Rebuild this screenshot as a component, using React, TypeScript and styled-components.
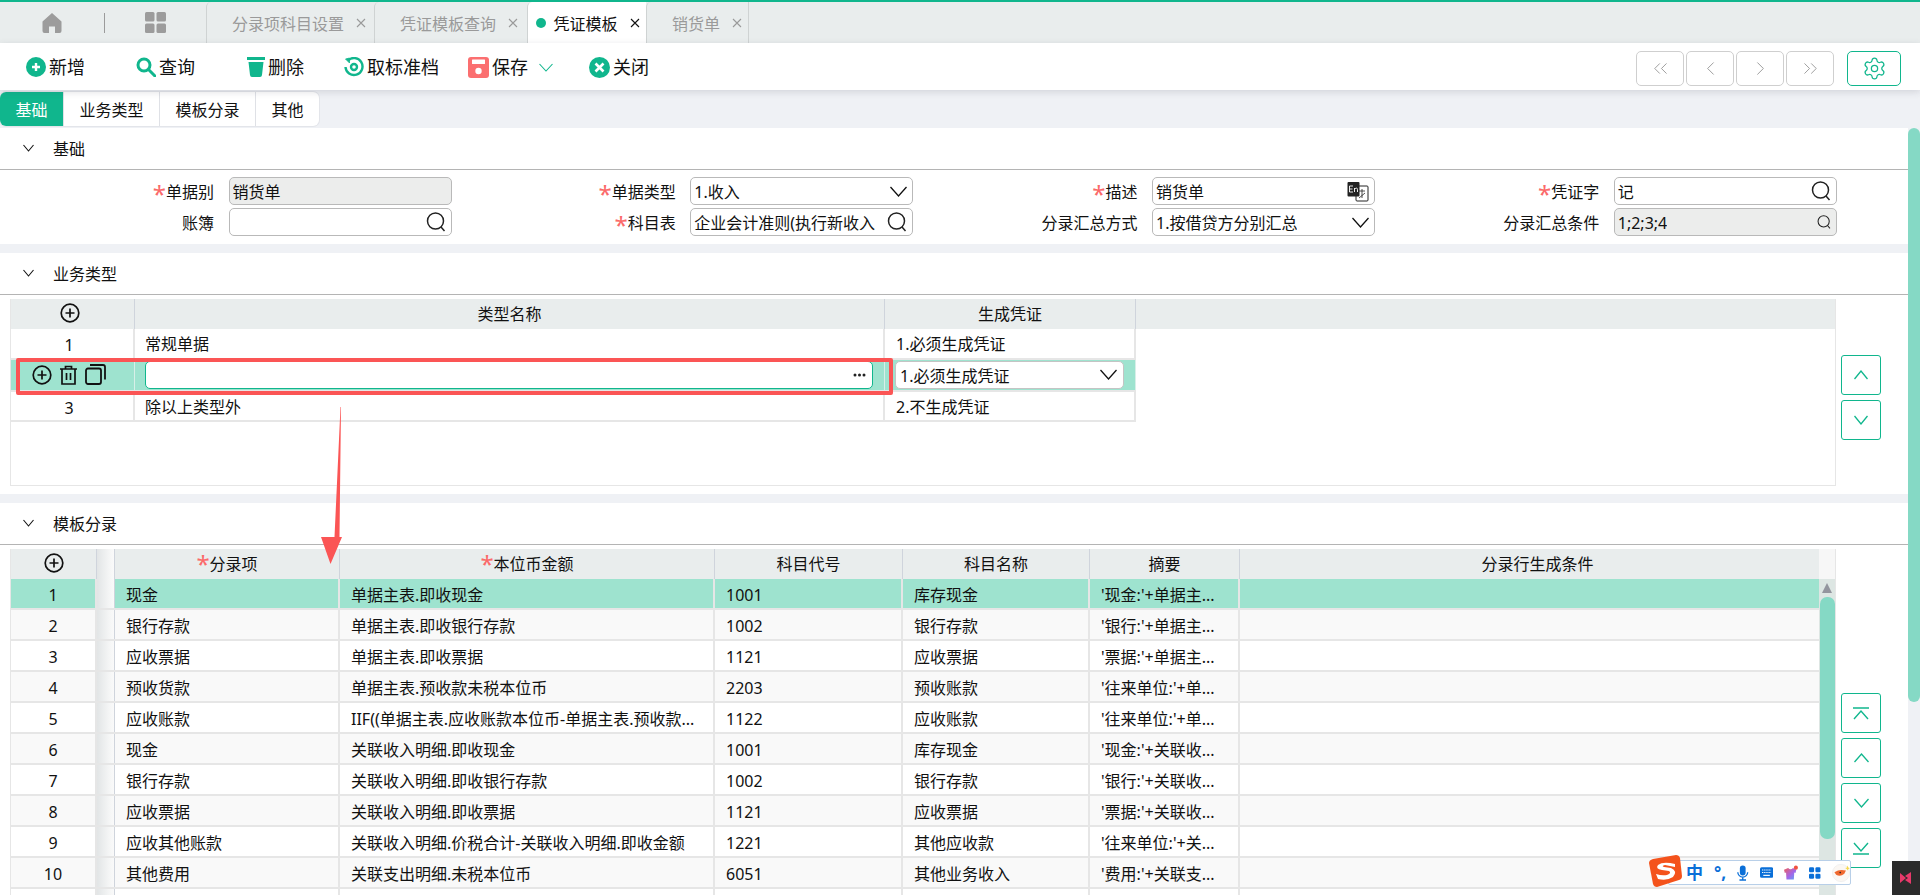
import React from "react";
import styled, { createGlobalStyle } from "styled-components";
import { ChevronLeft, ChevronRight, ChevronsLeft, ChevronsRight, Settings } from "lucide-react";

const GREEN = "#10b68d";
const SELECTED = "#9ee3cf";
const HEAD = "#e9eded";
const LINE = "#e6e6e6";

const GlobalStyle = createGlobalStyle`
  html, body {
    margin: 0;
    padding: 0;
    overflow: hidden;
    background: #eff1f5;
    font-family: "Noto Sans", "Noto Sans CJK SC", "Liberation Sans", sans-serif;
    font-size: 16px;
    color: #111;
  }
  * {
    box-sizing: border-box;
  }
`;

const Page = styled.div`
  position: relative;
  display: flex;
  flex-direction: column;
  width: 1920px;
  height: 895px;
  overflow: hidden;
  background: #eff1f5;
`;

/* top tabs */
const TopBar = styled.div`
  display: flex;
  height: 43px;
  flex: none;
  background: ${HEAD};
  border-top: 2px solid ${GREEN};
`;

const HomeArea = styled.div`
  display: flex;
  align-items: center;
  width: 206px;
  padding: 0 0 0 42px;
`;

const Separator = styled.span`
  width: 1px;
  height: 20px;
  margin: 0 40px 0 42px;
  background: #9b9b9b;
`;

const PageTab = styled.div<{ $width: number; $active?: boolean }>`
  display: flex;
  align-items: center;
  width: ${(p) => p.$width}px;
  padding-left: ${(p) => (p.$active ? 8 : 25)}px;
  background: ${(p) => (p.$active ? "#fff" : "transparent")};
  border-left: 1px solid #cfd3d3;
  border-radius: 5px 0 0 0;
  color: ${(p) => (p.$active ? "#111" : "#9a9a9a")};
  white-space: nowrap;

  &:last-child {
    border-right: 1px solid #cfd3d3;
  }
`;

const Dot = styled.span`
  width: 10px;
  height: 10px;
  margin-right: 8px;
  border-radius: 50%;
  background: ${GREEN};
`;

const TabClose = styled.svg`
  width: 10px;
  height: 10px;
  margin-left: 12px;
  stroke: currentColor;
  stroke-width: 1.1;
  fill: none;
`;

/* toolbar */
const Toolbar = styled.div`
  position: relative;
  z-index: 2;
  display: flex;
  align-items: center;
  flex: none;
  height: 47px;
  padding: 4px 19px 0 26px;
  background: #fff;
  box-shadow: 0 2px 7px rgba(60, 65, 80, 0.16);
`;

const ToolButton = styled.div<{ $after: number }>`
  display: flex;
  align-items: center;
  gap: 3px;
  margin-top: -3px;
  margin-right: ${(p) => p.$after}px;
  font-size: 18px;
  line-height: 24px;
  white-space: nowrap;
`;

const NavGroup = styled.div`
  display: flex;
  gap: 2px;
  margin-left: auto;
`;

const NavButton = styled.div`
  display: flex;
  align-items: center;
  justify-content: center;
  width: 48px;
  height: 35px;
  border: 1px solid #cfcfcf;
  border-radius: 5px;
  color: #8f8f8f;
`;

const SettingButton = styled.div`
  display: flex;
  align-items: center;
  justify-content: center;
  width: 54px;
  height: 35px;
  margin-left: 13px;
  border: 1px solid ${GREEN};
  border-radius: 5px;
  color: ${GREEN};
`;

/* form tabs */
const FormTabs = styled.div`
  display: flex;
  flex: none;
  align-self: flex-start;
  height: 34px;
  margin: 2px 0 2px;
  background: #fff;
  border-radius: 6px;
  box-shadow: 0 0 0 1px #e3e5ea;
`;

const FormTab = styled.div<{ $active?: boolean }>`
  display: flex;
  align-items: center;
  padding: 0 15.5px;
  background: ${(p) => (p.$active ? GREEN : "transparent")};
  border-radius: ${(p) => (p.$active ? "6px 0 0 6px" : "0")};
  border-right: 1px solid #dfe1e6;
  color: ${(p) => (p.$active ? "#fff" : "#111")};

  &:last-child {
    border-right: 0;
  }
`;

/* scrolling body */
const Body = styled.div`
  display: flex;
  flex: 1;
  min-height: 0;
`;

const Content = styled.div`
  display: flex;
  flex-direction: column;
  gap: 9px;
  width: 1908px;
  flex: none;
`;

const PageScroll = styled.div`
  width: 12px;
  flex: none;
`;

const PageThumb = styled.div`
  height: 574px;
  background: #85d9c5;
  border-radius: 6px;
`;

const Section = styled.section`
  background: #fff;
`;

const SectionHead = styled.div`
  display: flex;
  align-items: center;
  gap: 19px;
  height: 42px;
  padding: 0 0 2px 23px;
  border-bottom: 1px solid #b4b4b4;
`;

/* base form */
const FormGrid = styled.div`
  display: grid;
  grid-template-columns: repeat(4, 461.75px);
  row-gap: 3px;
  padding: 7px 0 8px;
`;

const Field = styled.div`
  display: grid;
  grid-template-columns: 214px 223px;
  column-gap: 14.5px;
  align-items: center;
`;

const Label = styled.div`
  text-align: right;
  white-space: nowrap;
`;

const Star = styled.span`
  color: #fb6a6a;
  font-size: 24px;
  line-height: 0;
  vertical-align: -5px;
`;

const InputBox = styled.div<{ $disabled?: boolean }>`
  display: flex;
  align-items: center;
  justify-content: space-between;
  height: 28px;
  padding: 0 5px 0 3px;
  background: ${(p) => (p.$disabled ? "#ecedec" : "#fff")};
  border: 1px solid #b9b9b9;
  border-radius: 5px;
  white-space: nowrap;
  overflow: hidden;
  line-height: 26px;
`;

const InputText = styled.span`
  overflow: hidden;
  min-width: 0;
  padding-top: 1px;
`;

/* tables */
const TableRow = styled.div`
  display: flex;
  gap: 5px;
  padding: 4px 0 8px 10px;
`;

const GridTable = styled.div<{ $height?: number }>`
  position: relative;
  width: 1826px;
  flex: none;
  height: ${(p) => (p.$height ? `${p.$height}px` : "auto")};
  border-bottom: 1px solid ${LINE};
  border-left: 1px solid ${LINE};
  border-right: 1px solid ${LINE};
`;

const Row = styled.div<{ $cols: string; $bg?: string; $height?: number; $line?: boolean; $fit?: boolean }>`
  display: grid;
  grid-template-columns: ${(p) => p.$cols};
  width: ${(p) => (p.$fit ? "1125px" : "auto")};
  height: ${(p) => p.$height ?? 31}px;
  background: ${(p) => p.$bg ?? "#fff"};
  border-bottom: ${(p) => (p.$line === false ? "0" : `2px solid ${LINE}`)};
`;

const HeadCell = styled.div<{ $shift?: number }>`
  display: flex;
  align-items: center;
  justify-content: center;
  padding-right: ${(p) => p.$shift ?? 0}px;
  border-right: 1px solid #cfd4dc;
  line-height: 20px;

  &:last-child {
    border-right: 0;
  }

  svg {
    margin-bottom: 2px;
  }
`;

const Cell = styled.div`
  padding: 2px 11px 0;
  border-right: 2px solid ${LINE};
  line-height: 29px;
  white-space: nowrap;
  overflow: hidden;
`;

const NumberCell = styled(Cell)<{ $shift?: number }>`
  padding: 2px ${(p) => p.$shift ?? 0}px 0 0;
  text-align: center;
`;

const NameCell = styled(Cell)`
  padding: 1px 10px 0;
`;

const BizCell = styled(Cell)`
  padding-top: 1px;
`;

const PlainCell = styled.div`
  display: flex;
  align-items: center;
  justify-content: center;
  gap: 7px;
  padding: 0 7px 1px 0;
  border-right: 1px solid #d8efe8;
`;

const EditCell = styled.div`
  display: flex;
  align-items: center;
  padding: 0 11px 1px 10px;
  border-right: 1px solid #d8efe8;
`;

const EditInput = styled.div<{ $focus?: boolean }>`
  display: flex;
  align-items: center;
  justify-content: space-between;
  flex: 1;
  height: 28px;
  padding: 0 6px 0 4px;
  background: #fff;
  border: 1.5px solid ${(p) => (p.$focus ? GREEN : "#c4c4c4")};
  border-radius: 5px;
  white-space: nowrap;
`;

const Blank = styled.div`
  height: 100%;
`;

const FrozenGap = styled.div`
  border-right: 1px solid #cfd4dc;
  background: linear-gradient(90deg, #e2e5e6, #f4f5f5 70%, #fafafa);
`;

const SideButtons = styled.div<{ $top: number }>`
  display: flex;
  flex-direction: column;
  gap: 5px;
  padding-top: ${(p) => p.$top}px;
`;

const SideButton = styled.div`
  display: flex;
  align-items: center;
  justify-content: center;
  width: 40px;
  height: 40px;
  background: #fff;
  border: 1px solid ${GREEN};
  border-radius: 3px;
  color: ${GREEN};
`;

const ScrollCol = styled.div`
  position: absolute;
  top: 0;
  right: 0;
  bottom: 0;
  width: 16px;
  background: #dde6e3;
`;

const ScrollCorner = styled.div`
  height: 30px;
  background: #f7f7f7;
`;

const ScrollArrow = styled.div`
  width: 0;
  height: 0;
  margin: 4px auto 4px;
  border-left: 5.5px solid transparent;
  border-right: 5.5px solid transparent;
  border-bottom: 10px solid #93959e;
`;

const ScrollThumb = styled.div`
  width: 15px;
  height: 242px;
  margin: 0 auto;
  background: #85d9c5;
  border-radius: 7px;
`;

/* annotations on the screenshot */
const RedBox = styled.div`
  position: absolute;
  left: 16px;
  top: 358px;
  width: 877px;
  height: 37px;
  border: 4px solid #fb5555;
  border-radius: 2px;
  pointer-events: none;
`;

const Arrow = styled.svg`
  position: absolute;
  left: 315px;
  top: 400px;
  width: 35px;
  height: 170px;
  pointer-events: none;
`;

/* input method bar */
const ImeBar = styled.div`
  position: absolute;
  left: 1668px;
  top: 860px;
  display: flex;
  align-items: center;
  gap: 11px;
  width: 183px;
  height: 25px;
  padding-left: 17px;
  background: #fff;
  border: 1px solid #b8cfe8;
  border-radius: 2px;
  color: #0a6fd8;
`;

const ImeLogo = styled.svg`
  position: absolute;
  left: 1649px;
  top: 855px;
  width: 33px;
  height: 32px;
`;

const ImeChar = styled.span`
  font-size: 17px;
  font-weight: 700;
  line-height: 20px;
`;

const CornerBadge = styled.div`
  position: absolute;
  right: 0;
  bottom: 0;
  display: flex;
  align-items: center;
  justify-content: center;
  width: 28px;
  height: 34px;
  background: #2b2b2b;
`;

/* icons */
const HomeIcon = () => (
  <svg width="20" height="20" viewBox="0 0 20 20" fill="#9c9c9c">
    <path d="M10 0 L19.5 8.5 V18 Q19.5 20 17.5 20 H13 V13.5 H7 V20 H2.5 Q0.5 20 0.5 18 V8.5 Z" />
  </svg>
);

const GridIcon = () => (
  <svg width="21" height="21" viewBox="0 0 21 21" fill="#9c9c9c">
    <rect x="0" y="0" width="9.5" height="9.5" rx="1.5" />
    <rect x="11.5" y="0" width="9.5" height="9.5" rx="1.5" />
    <rect x="0" y="11.5" width="9.5" height="9.5" rx="1.5" />
    <rect x="11.5" y="11.5" width="9.5" height="9.5" rx="1.5" />
  </svg>
);

const CloseGlyph = () => (
  <TabClose viewBox="0 0 10 10">
    <path d="M1 1 L9 9 M9 1 L1 9" />
  </TabClose>
);

const AddIcon = () => (
  <svg width="20" height="20" viewBox="0 0 20 20">
    <circle cx="10" cy="10" r="10" fill={GREEN} />
    <path d="M10 6 V14 M6 10 H14" stroke="#fff" strokeWidth="2.4" />
  </svg>
);

const QueryIcon = () => (
  <svg width="20" height="20" viewBox="0 0 20 20" fill="none" stroke={GREEN}>
    <circle cx="8" cy="8" r="6" strokeWidth="3" />
    <path d="M12.5 12.5 L19 19" strokeWidth="3" strokeLinecap="round" />
  </svg>
);

const DeleteIcon = () => (
  <svg width="18" height="20" viewBox="0 0 18 20" fill={GREEN}>
    <rect x="0" y="0" width="18" height="3" />
    <path d="M1.5 5 H16.5 L15 18 Q14.8 20 13 20 H5 Q3.2 20 3 18 Z" />
  </svg>
);

const UnfileIcon = () => (
  <svg width="20" height="20" viewBox="0 0 20 20" fill="none" stroke={GREEN}>
    <path d="M4 3.5 A8.5 8.5 0 1 1 1.5 10" strokeWidth="2.4" />
    <path d="M1.5 2 L5.5 1 L5.5 6 Z" fill={GREEN} strokeWidth="0.8" />
    <circle cx="10" cy="10" r="3" strokeWidth="2.4" />
  </svg>
);

const SaveIcon = () => (
  <svg width="21" height="21" viewBox="0 0 21 21">
    <rect x="0" y="0" width="21" height="21" rx="3" fill="#fb6f70" />
    <rect x="4" y="2.5" width="13" height="4.5" rx="0.5" fill="#fff" />
    <circle cx="10.5" cy="14" r="3.2" fill="#fff" />
  </svg>
);

const CloseIcon = () => (
  <svg width="21" height="21" viewBox="0 0 21 21">
    <circle cx="10.5" cy="10.5" r="10.5" fill={GREEN} />
    <path d="M6.5 6.5 L14.5 14.5 M14.5 6.5 L6.5 14.5" stroke="#fff" strokeWidth="2.6" />
  </svg>
);

const LensIcon = ({ size = 20 }: { size?: number }) => (
  <svg width={size} height={size} viewBox="0 0 20 20" fill="none" stroke="#222" strokeWidth="1.5">
    <circle cx="9.5" cy="9" r="8" />
    <path d="M15 15 L18.5 19" />
  </svg>
);

const EnZhIcon = () => (
  <svg width="22" height="22" viewBox="0 0 22 22">
    <rect x="9" y="6" width="12" height="15" rx="1" fill="#fff" stroke="#222" strokeWidth="1" />
    <path d="M12 11 H18 M15 9 V18 M12 18 L18 13" stroke="#222" strokeWidth="0.8" fill="none" />
    <rect x="0.5" y="2" width="12" height="14.5" rx="1" fill="#222" />
    <path d="M2.5 6 H6 M2.5 6 V12 H6 M2.5 9 H5.5 M7.5 12 V8 M7.5 9 Q10.5 7 10.5 9.5 V12" stroke="#fff" strokeWidth="0.9" fill="none" />
  </svg>
);

const PlusCircle = () => (
  <svg width="20" height="20" viewBox="0 0 20 20" fill="none" stroke="#111" strokeWidth="1.7">
    <circle cx="10" cy="10" r="8.8" />
    <path d="M10 5.5 V14.5 M5.5 10 H14.5" />
  </svg>
);

const TrashIcon = () => (
  <svg width="19" height="20" viewBox="0 0 19 20" fill="none" stroke="#111" strokeWidth="1.7">
    <path d="M1 4 H18 M6.5 4 V1.5 H12.5 V4 M3 4 V19 H16 V4 M7.5 8 V15 M11.5 8 V15" />
  </svg>
);

const CopyIcon = () => (
  <svg width="21" height="21" viewBox="0 0 21 21" fill="none" stroke="#111" strokeWidth="1.8">
    <rect x="1" y="4.5" width="15" height="15.5" rx="2" />
    <path d="M5 1 H18 Q20 1 20 3 V15.5" />
  </svg>
);

const DotsIcon = () => (
  <svg width="13" height="4" viewBox="0 0 13 4" fill="#222">
    <circle cx="2" cy="2" r="1.5" />
    <circle cx="6.5" cy="2" r="1.5" />
    <circle cx="11" cy="2" r="1.5" />
  </svg>
);

const Chevron = ({ w, h, up, color = "currentColor", weight = 1.3 }: { w: number; h: number; up?: boolean; color?: string; weight?: number }) => (
  <svg width={w} height={h + 2} viewBox={`0 0 ${w} ${h + 2}`} fill="none" stroke={color} strokeWidth={weight}>
    <path d={up ? `M0.5 ${h + 1} L${w / 2} 1 L${w - 0.5} ${h + 1}` : `M0.5 1 L${w / 2} ${h + 1} L${w - 0.5} 1`} />
  </svg>
);

const BarUp = () => (
  <svg width="16" height="13" viewBox="0 0 16 13" fill="none" stroke={GREEN} strokeWidth="1.4">
    <path d="M0 1 H16 M1 12 L8 4 L15 12" />
  </svg>
);

const BarDown = () => (
  <svg width="16" height="13" viewBox="0 0 16 13" fill="none" stroke={GREEN} strokeWidth="1.4">
    <path d="M0 12 H16 M1 1 L8 9 L15 1" />
  </svg>
);

const BIZ_COLS = "124px 750px 251px 1fr";
const BIZ_BODY_COLS = "124px 750px 251px";
const ENTRY_COLS = "86px 18px 225px 375px 188px 187px 150px 1fr";

const entries = [
  ["现金", "单据主表.即收现金", "1001", "库存现金", "'现金:'+单据主..."],
  ["银行存款", "单据主表.即收银行存款", "1002", "银行存款", "'银行:'+单据主..."],
  ["应收票据", "单据主表.即收票据", "1121", "应收票据", "'票据:'+单据主..."],
  ["预收货款", "单据主表.预收款未税本位币", "2203", "预收账款", "'往来单位:'+单..."],
  ["应收账款", "IIF((单据主表.应收账款本位币-单据主表.预收款...", "1122", "应收账款", "'往来单位:'+单..."],
  ["现金", "关联收入明细.即收现金", "1001", "库存现金", "'现金:'+关联收..."],
  ["银行存款", "关联收入明细.即收银行存款", "1002", "银行存款", "'银行:'+关联收..."],
  ["应收票据", "关联收入明细.即收票据", "1121", "应收票据", "'票据:'+关联收..."],
  ["应收其他账款", "关联收入明细.价税合计-关联收入明细.即收金额", "1221", "其他应收款", "'往来单位:'+关..."],
  ["其他费用", "关联支出明细.未税本位币", "6051", "其他业务收入", "'费用:'+关联支..."],
];

const rowColor = (i: number) => {
  if (i === 0) return SELECTED;
  return i % 2 === 1 ? "#f9f9f9" : "#fff";
};

const SectionTitle = ({ title }: { title: string }) => (
  <SectionHead>
    <Chevron w={11} h={6} weight={1.1} />
    {title}
  </SectionHead>
);

const FormField = ({ label, required, children }: { label: string; required?: boolean; children: React.ReactNode }) => (
  <Field>
    <Label>
      {required && <Star>*</Star>}
      {label}
    </Label>
    {children}
  </Field>
);

const App = () => {
  return (
    <Page>
      <GlobalStyle />
      <TopBar>
        <HomeArea>
          <HomeIcon />
          <Separator />
          <GridIcon />
        </HomeArea>
        <PageTab $width={168}>
          分录项科目设置
          <CloseGlyph />
        </PageTab>
        <PageTab $width={152.5}>
          凭证模板查询
          <CloseGlyph />
        </PageTab>
        <PageTab $width={119.5} $active>
          <Dot />
          凭证模板
          <CloseGlyph />
        </PageTab>
        <PageTab $width={103}>
          销货单
          <CloseGlyph />
        </PageTab>
      </TopBar>

      <Toolbar>
        <ToolButton $after={51}>
          <AddIcon />
          新增
        </ToolButton>
        <ToolButton $after={52}>
          <QueryIcon />
          查询
        </ToolButton>
        <ToolButton $after={40}>
          <DeleteIcon />
          删除
        </ToolButton>
        <ToolButton $after={29}>
          <UnfileIcon />
          取标准档
        </ToolButton>
        <ToolButton $after={11}>
          <SaveIcon />
          保存
        </ToolButton>
        <ToolButton $after={36}>
          <Chevron w={14} h={7} color={GREEN} weight={1.1} />
        </ToolButton>
        <ToolButton $after={0}>
          <CloseIcon />
          关闭
        </ToolButton>
        <NavGroup>
          <NavButton>
            <ChevronsLeft size={23} strokeWidth={0.9} />
          </NavButton>
          <NavButton>
            <ChevronLeft size={23} strokeWidth={0.9} />
          </NavButton>
          <NavButton>
            <ChevronRight size={23} strokeWidth={0.9} />
          </NavButton>
          <NavButton>
            <ChevronsRight size={23} strokeWidth={0.9} />
          </NavButton>
        </NavGroup>
        <SettingButton>
          <Settings size={25} strokeWidth={1.2} />
        </SettingButton>
      </Toolbar>

      <FormTabs>
        <FormTab $active>基础</FormTab>
        <FormTab>业务类型</FormTab>
        <FormTab>模板分录</FormTab>
        <FormTab>其他</FormTab>
      </FormTabs>

      <Body>
        <Content>
          <Section>
            <SectionTitle title="基础" />
            <FormGrid>
              <FormField label="单据别" required>
                <InputBox $disabled>
                  <InputText>销货单</InputText>
                </InputBox>
              </FormField>
              <FormField label="单据类型" required>
                <InputBox>
                  <InputText>1.收入</InputText>
                  <Chevron w={17} h={9} />
                </InputBox>
              </FormField>
              <FormField label="描述" required>
                <InputBox>
                  <InputText>销货单</InputText>
                  <EnZhIcon />
                </InputBox>
              </FormField>
              <FormField label="凭证字" required>
                <InputBox>
                  <InputText>记</InputText>
                  <LensIcon />
                </InputBox>
              </FormField>
              <FormField label="账簿">
                <InputBox>
                  <InputText />
                  <LensIcon />
                </InputBox>
              </FormField>
              <FormField label="科目表" required>
                <InputBox>
                  <InputText>企业会计准则(执行新收入</InputText>
                  <LensIcon />
                </InputBox>
              </FormField>
              <FormField label="分录汇总方式">
                <InputBox>
                  <InputText>1.按借贷方分别汇总</InputText>
                  <Chevron w={17} h={9} />
                </InputBox>
              </FormField>
              <FormField label="分录汇总条件">
                <InputBox $disabled>
                  <InputText>1;2;3;4</InputText>
                  <LensIcon size={14} />
                </InputBox>
              </FormField>
            </FormGrid>
          </Section>

          <Section>
            <SectionTitle title="业务类型" />
            <TableRow>
              <GridTable $height={187}>
                <Row $cols={BIZ_COLS} $bg={HEAD} $height={30} $line={false}>
                  <HeadCell $shift={5}>
                    <PlusCircle />
                  </HeadCell>
                  <HeadCell>类型名称</HeadCell>
                  <HeadCell>生成凭证</HeadCell>
                  <HeadCell />
                </Row>
                <Row $cols={BIZ_BODY_COLS} $height={31} $fit>
                  <NumberCell $shift={6}>1</NumberCell>
                  <NameCell>常规单据</NameCell>
                  <BizCell>1.必须生成凭证</BizCell>
                </Row>
                <Row $cols={BIZ_BODY_COLS} $bg={SELECTED} $height={32} $fit>
                  <PlainCell>
                    <PlusCircle />
                    <TrashIcon />
                    <CopyIcon />
                  </PlainCell>
                  <EditCell>
                    <EditInput $focus>
                      <span />
                      <DotsIcon />
                    </EditInput>
                  </EditCell>
                  <EditCell>
                    <EditInput>
                      1.必须生成凭证
                      <Chevron w={17} h={9} />
                    </EditInput>
                  </EditCell>
                </Row>
                <Row $cols={BIZ_BODY_COLS} $height={30} $fit>
                  <NumberCell $shift={6}>3</NumberCell>
                  <NameCell>除以上类型外</NameCell>
                  <BizCell>2.不生成凭证</BizCell>
                </Row>
              </GridTable>
              <SideButtons $top={56}>
                <SideButton>
                  <Chevron w={14} h={8} up />
                </SideButton>
                <SideButton>
                  <Chevron w={14} h={8} />
                </SideButton>
              </SideButtons>
            </TableRow>
          </Section>

          <Section>
            <SectionTitle title="模板分录" />
            <TableRow>
              <GridTable>
                <Row $cols={ENTRY_COLS} $bg={HEAD} $height={30} $line={false}>
                  <HeadCell>
                    <PlusCircle />
                  </HeadCell>
                  <FrozenGap />
                  <HeadCell>
                    <Star>*</Star>分录项
                  </HeadCell>
                  <HeadCell>
                    <Star>*</Star>本位币金额
                  </HeadCell>
                  <HeadCell>科目代号</HeadCell>
                  <HeadCell>科目名称</HeadCell>
                  <HeadCell>摘要</HeadCell>
                  <HeadCell>分录行生成条件</HeadCell>
                </Row>
                {entries.map((entry, i) => (
                  <Row key={i} $cols={ENTRY_COLS} $bg={rowColor(i)}>
                    <NumberCell>{i + 1}</NumberCell>
                    <FrozenGap />
                    <Cell>{entry[0]}</Cell>
                    <Cell>{entry[1]}</Cell>
                    <Cell>{entry[2]}</Cell>
                    <Cell>{entry[3]}</Cell>
                    <Cell>{entry[4]}</Cell>
                    <Blank />
                  </Row>
                ))}
                <Row $cols={ENTRY_COLS}>
                  <NumberCell />
                  <FrozenGap />
                  <Cell />
                  <Cell />
                  <Cell />
                  <Cell />
                  <Cell />
                  <Blank />
                </Row>
                <ScrollCol>
                  <ScrollCorner />
                  <ScrollArrow />
                  <ScrollThumb />
                </ScrollCol>
              </GridTable>
              <SideButtons $top={144}>
                <SideButton>
                  <BarUp />
                </SideButton>
                <SideButton>
                  <Chevron w={15} h={8} up />
                </SideButton>
                <SideButton>
                  <Chevron w={15} h={8} />
                </SideButton>
                <SideButton>
                  <BarDown />
                </SideButton>
              </SideButtons>
            </TableRow>
          </Section>
        </Content>
        <PageScroll>
          <PageThumb />
        </PageScroll>
      </Body>

      <RedBox />
      <Arrow viewBox="0 0 35 170">
        <path d="M25.5 7 L26 7 L24.5 137 L27 137 L15.5 164 L6 137 L19.5 137 Z" fill="#fb5555" />
      </Arrow>

      <ImeBar>
        <ImeChar>中</ImeChar>
        <ImeChar>°,</ImeChar>
        <svg width="14" height="18" viewBox="0 0 14 18" fill="none" stroke="#0a6fd8" strokeWidth="1.6">
          <rect x="3.5" y="0" width="7" height="12" rx="3.5" fill="#0a6fd8" stroke="none" />
          <path d="M1 8 A6 6 0 0 0 13 8 M7 14 V18 M3 17.5 H11" />
        </svg>
        <svg width="16" height="13" viewBox="0 0 16 13">
          <rect width="16" height="13" rx="2" fill="#0a6fd8" />
          <path d="M2.5 3.5 H13.5 M2.5 6.5 H13.5" stroke="#fff" strokeWidth="1.4" strokeDasharray="1.6 1" />
          <path d="M4 10 H12" stroke="#fff" strokeWidth="1.4" />
        </svg>
        <svg width="18" height="18" viewBox="0 0 18 18">
          <defs>
            <linearGradient id="shirt" x1="0" y1="0" x2="1" y2="1">
              <stop offset="0" stopColor="#f0605a" />
              <stop offset="0.55" stopColor="#a565e8" />
              <stop offset="1" stopColor="#5aa8f5" />
            </linearGradient>
          </defs>
          <path d="M0 5 L5 3 Q8 6 11 3 L15 5 L14 9 L12.5 8.5 L12 17 H3 L2.5 8.5 L1 9 Z" fill="url(#shirt)" />
          <circle cx="14.5" cy="2.5" r="2.5" fill="#f0523f" />
        </svg>
        <svg width="14" height="14" viewBox="0 0 14 14" fill="#0a6fd8">
          <rect width="6.2" height="6.2" rx="1.6" />
          <rect x="7.8" width="6.2" height="6.2" rx="1.6" />
          <rect y="7.8" width="6.2" height="6.2" rx="1.6" />
          <rect x="7.8" y="7.8" width="6.2" height="6.2" rx="1.6" />
        </svg>
        <svg width="22" height="22" viewBox="0 0 22 22">
          <circle cx="11" cy="11" r="10.5" fill="#fbf7f3" stroke="#eee" />
          <path d="M3 10 Q9 6 17 8 L15 12 Q10 16 5 13 Z" fill="#f0682e" />
          <circle cx="10" cy="10.5" r="1" fill="#222" />
          <path d="M19 2 L20 4.5 L22 5 L20 6 L19 8 L18 6 L16 5 L18 4.5 Z" fill="#f6d84a" />
        </svg>
      </ImeBar>
      <ImeLogo viewBox="0 0 33 32">
        <path d="M4 4 L27 0 Q30 0 31 3 L33 21 Q33 24 30 25 L8 32 Q5 32 4 29 L0 8 Q0 5 4 4 Z" fill="#f4531c" />
        <path d="M26 9 Q14 6 9 10 Q6 14 13 15 L20 16 Q23 18 18 20 Q13 21 7 19 L9 24 Q18 26 24 22 Q29 16 22 13 L15 12 Q12 11 16 10 L26 12 Z" fill="#fff" />
      </ImeLogo>
      <CornerBadge>
        <svg width="12" height="12" viewBox="0 0 12 12" fill="#e8396a">
          <path d="M0 1 L6 6 L0 11 Z M11 0 V12 L5 8 L8 6 L5 4 Z" />
        </svg>
      </CornerBadge>
    </Page>
  );
};

export default App;
